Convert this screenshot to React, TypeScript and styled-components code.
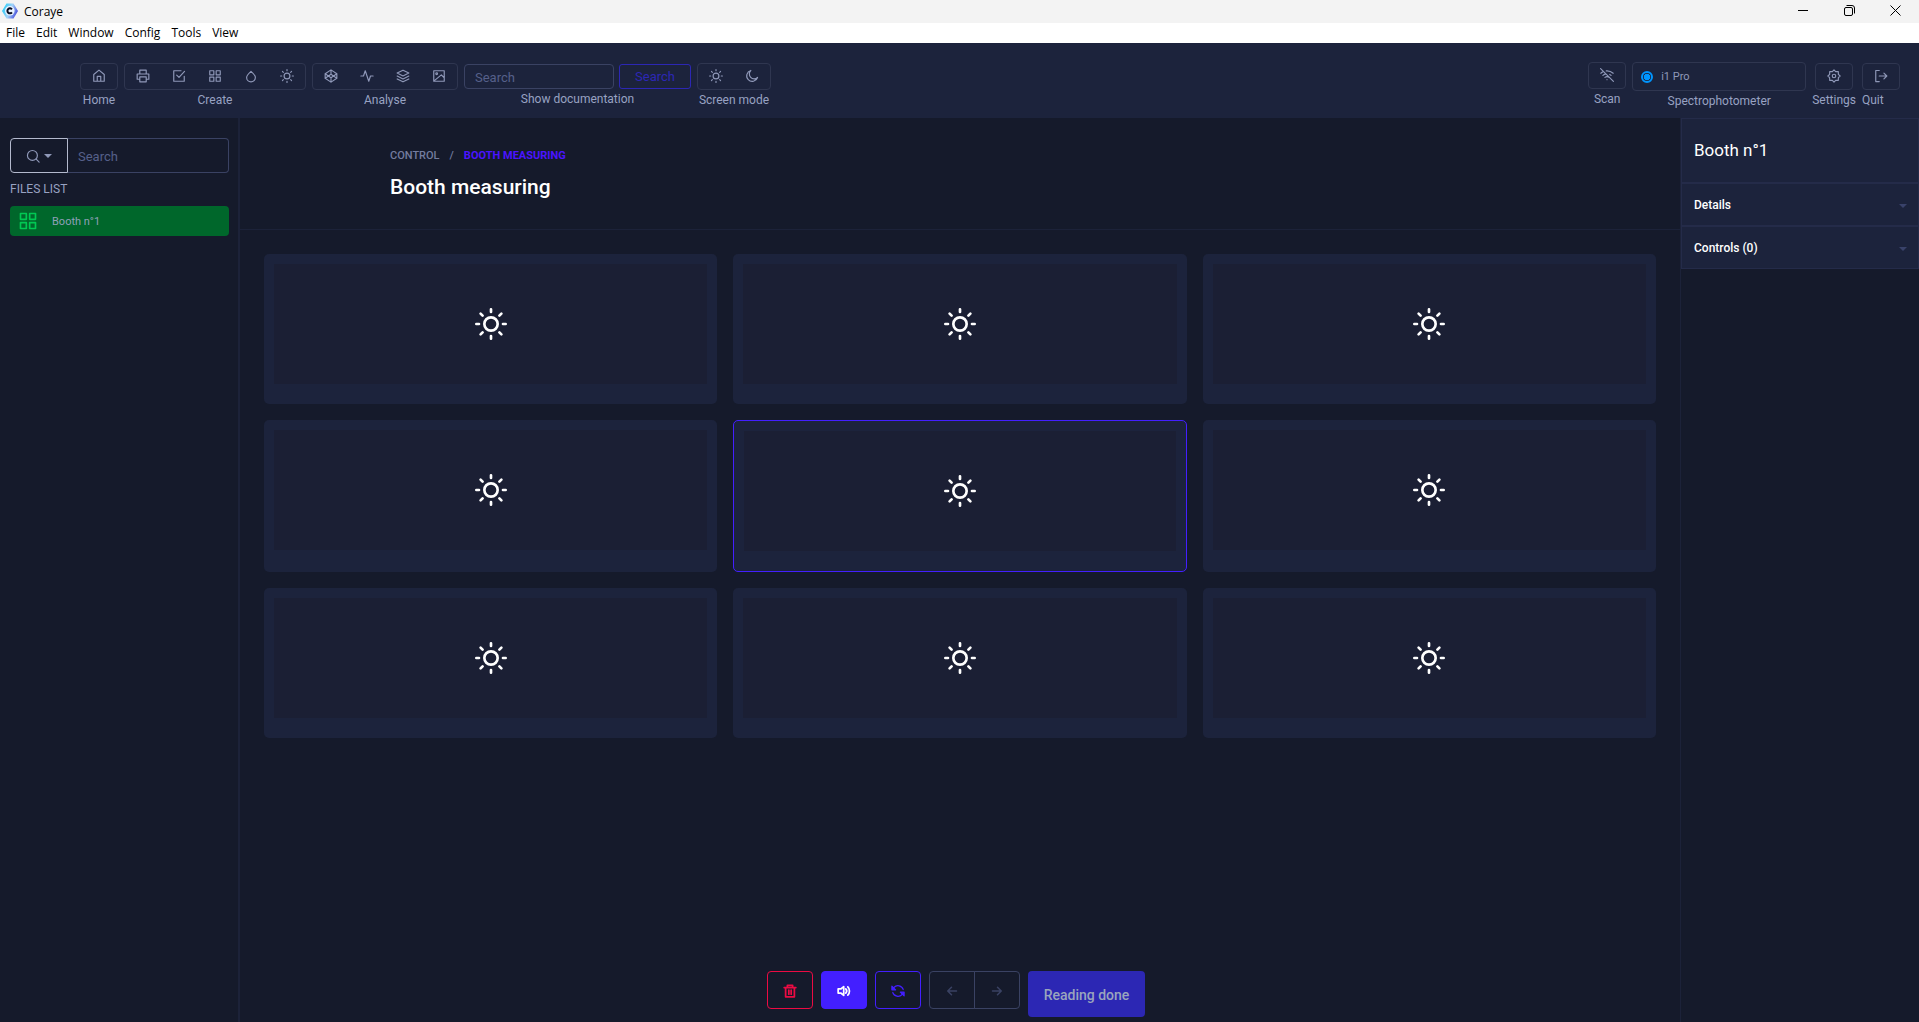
import React from "react";
import styled, { createGlobalStyle, css } from "styled-components";

const c = {
  page: "#151a2b",
  panel: "#1c233c",
  inner: "#1b1f34",
  line: "#1c2239",
  panelLine: "#242b49",
  control: "#2f3650",
  field: "#3a4263",
  text: "#8f98b8",
  label: "#98a2c2",
  violet: "#431fff",
  violetDim: "#2c27b4",
  red: "#ec0b43",
  white: "#ffffff",
};

const GlobalStyle = createGlobalStyle`
  *, *::before, *::after { box-sizing: border-box; }
  html, body, #root { height: 100%; }
  body {
    margin: 0;
    background: ${c.page};
    color: ${c.text};
    font: 400 12px/19px Roboto, "Noto Sans", sans-serif;
  }
  button, input { font: inherit; color: inherit; margin: 0; }
  button { cursor: pointer; }
  h1, h2, ul, ol, p { margin: 0; padding: 0; font-weight: inherit; }
  ul, ol { list-style: none; }
`;

const Window = styled.div`
  display: flex;
  flex-direction: column;
  min-height: 100%;
`;

const TitleBar = styled.div`
  display: flex;
  align-items: flex-start;
  height: 23px;
  padding: 0 1px 0 2px;
  background: #f3f3f3;
  color: #000;
  font: 12px/23px "Open Sans", "Noto Sans", sans-serif;
`;

const AppMark = styled.span`
  display: flex;
  padding-top: 3px;
`;

const AppName = styled.span`
  flex: 1;
  padding-left: 6px;
`;

const WindowButton = styled.button`
  display: flex;
  align-items: center;
  justify-content: center;
  width: 46px;
  height: 21px;
  padding: 0;
  border: 0;
  background: none;
`;

const MenuBar = styled.nav`
  display: flex;
  height: 20px;
  background: #fff;
  color: #000;
  font: 12px/20px "Open Sans", "Noto Sans", sans-serif;
`;

const MenuItem = styled.button`
  padding: 0 5px 0 6px;
  border: 0;
  background: none;
`;

const Toolbar = styled.header`
  display: flex;
  align-items: center;
  gap: 6px;
  padding: 19px 19px 8px 80px;
  background: ${c.panel};
`;

const ToolGroup = styled.div<{ $align?: string }>`
  display: flex;
  flex-direction: column;
  align-items: ${(p) => p.$align ?? "center"};
`;

const ToolLabel = styled.span`
  padding-top: 2px;
  color: ${c.label};
  line-height: 17px;
`;

const Spacer = styled.div`
  flex: 1;
`;

const ScanCluster = styled.div`
  display: flex;
  align-items: flex-start;
  gap: 6px;
`;

const ToolBox = styled.div`
  display: flex;
  height: 27px;
  border: 1px solid ${c.control};
  border-radius: 4px;
`;

const ToolButton = styled.button`
  display: flex;
  align-items: center;
  justify-content: center;
  width: 36px;
  padding: 0 0 1px;
  border: 0;
  background: none;
`;

const DocSearch = styled.form`
  display: flex;
  gap: 5px;
  height: 25px;
  font-size: 13px;
`;

const fieldStyle = css`
  min-width: 0;
  border: 1px solid ${c.field};
  background: none;
  outline: none;
  font-size: 13px;
  &::placeholder { color: #56608a; opacity: 1; }
`;

const DocInput = styled.input`
  ${fieldStyle}
  width: 150px;
  padding: 1px 10px 0;
  border-radius: 4px;
`;

const DocButton = styled.button`
  width: 72px;
  padding: 0;
  border: 1px solid ${c.violetDim};
  border-radius: 3px;
  background: none;
  color: ${c.violetDim};
`;

const DeviceBox = styled.label`
  display: flex;
  align-items: center;
  gap: 8px;
  width: 174px;
  height: 29px;
  padding: 0 8px;
  border: 1px solid ${c.control};
  border-radius: 4px;
  font-size: 11px;
`;

const Radio = styled.input`
  appearance: none;
  width: 12px;
  height: 12px;
  border: 2px solid #0095ff;
  border-radius: 50%;
  background: radial-gradient(circle closest-side, #0095ff 72%, ${c.panel} 90%);
`;

const Body = styled.div`
  display: flex;
  flex: 1;
`;

const Sidebar = styled.aside`
  width: 240px;
  padding: 20px 9px 0 10px;
  border-right: 2px solid ${c.line};
`;

const FileSearch = styled.form`
  display: flex;
  height: 35px;
`;

const FilterButton = styled.button`
  display: flex;
  align-items: center;
  justify-content: center;
  gap: 4px;
  width: 58px;
  padding: 0;
  border: 1px solid #b4bace;
  border-radius: 4px 0 0 4px;
  background: none;
`;

const FileInput = styled.input`
  ${fieldStyle}
  flex: 1;
  padding: 2px 10px 0;
  border-left: 0;
  border-radius: 0 4px 4px 0;
`;

const ListTitle = styled.h2`
  padding: 7px 0;
  color: ${c.label};
  font-size: 12px;
`;

const FileItem = styled.button`
  display: flex;
  align-items: center;
  gap: 14px;
  width: 100%;
  height: 30px;
  padding: 0 8px;
  border: 0;
  border-radius: 4px;
  background: #00672b;
  font-size: 11px;
  color: #8fa0b8;
  svg { color: #00c853; }
`;

const Main = styled.main`
  display: flex;
  flex: 1;
  flex-direction: column;
  min-width: 0;
`;

const PageHead = styled.div`
  padding: 28px 150px;
  border-bottom: 1px solid ${c.line};
`;

const Crumbs = styled.ol`
  display: flex;
  gap: 10px;
  font-size: 11px;
  font-weight: 500;
  text-transform: uppercase;
  color: #737c9f;
`;

const CrumbLink = styled.a`
  color: inherit;
  text-decoration: none;
`;

const Current = styled.li`
  color: #4a14ff;
  font-weight: 700;
`;

const PageTitle = styled.h1`
  padding-top: 9px;
  color: ${c.white};
  font-size: 21px;
  font-weight: 500;
  line-height: 27px;
`;

const Grid = styled.div`
  display: grid;
  grid-template-columns: repeat(3, 1fr);
  gap: 16px;
  padding: 24px;
`;

const Card = styled.button<{ $selected: boolean }>`
  display: flex;
  flex-direction: column;
  padding: 10px 10px 20px;
  border: ${(p) => (p.$selected ? `1px solid ${c.violet}` : "0")};
  border-radius: 5px;
  background: ${c.panel};
`;

const Swatch = styled.span`
  display: flex;
  align-items: center;
  justify-content: center;
  width: 100%;
  height: 120px;
  background: ${c.inner};
  color: ${c.white};
`;

const Actions = styled.div`
  display: flex;
  align-items: flex-start;
  justify-content: center;
  gap: 8px;
  margin-top: auto;
  padding: 0 8px 5px 0;
`;

const ActionButton = styled.button<{ $tone: string; $filled?: boolean }>`
  display: flex;
  align-items: center;
  justify-content: center;
  width: 46px;
  height: 38px;
  padding: 2px 0 0;
  border: 1px solid ${(p) => p.$tone};
  border-radius: 4px;
  background: ${(p) => (p.$filled ? p.$tone : "none")};
  color: ${(p) => (p.$filled ? c.white : p.$tone)};
`;

const StepGroup = styled.div`
  display: flex;
  ${ActionButton}:first-child { border-radius: 4px 0 0 4px; }
  ${ActionButton}:last-child { border-radius: 0 4px 4px 0; margin-left: -1px; }
`;

const DoneButton = styled.button`
  height: 46px;
  padding: 2px 16px 0;
  border: 0;
  border-radius: 4px;
  background: ${c.violetDim};
  color: #9aa5bd;
  font-size: 14px;
  font-weight: 500;
`;

const Inspector = styled.aside`
  width: 239px;
  border-left: 1px solid ${c.line};
`;

const InspectorTitle = styled.h2`
  height: 65px;
  padding: 0 12px;
  border: 1px solid ${c.panelLine};
  background: ${c.panel};
  color: ${c.white};
  font-size: 17px;
  line-height: 63px;
`;

const Section = styled.button`
  display: flex;
  align-items: center;
  justify-content: space-between;
  width: 100%;
  height: 43px;
  padding: 2px 11px 0 12px;
  border: 1px solid ${c.panelLine};
  background: ${c.panel};
  color: ${c.white};
  font-weight: 500;
  svg { color: #39426a; }
`;

type IconName =
  | "home" | "printer" | "check" | "grid" | "drop" | "sun" | "codepen" | "activity"
  | "layers" | "image" | "moon" | "wifiOff" | "gear" | "exit" | "search" | "trash"
  | "volume" | "refresh" | "left" | "right";

const shapes: Record<IconName, React.ReactNode> = {
  home: <path d="M3 9.500 12 2l9 7.500V21H3zM9 21v-8.500h6V21" />,
  printer: <path d="M6.500 8.500V2h11v6.500M6.500 17.500H2v-9h20v9h-4.500M6.500 13.500h11V22h-11z" />,
  check: <path d="M15.500 3H3v18h18v-8.500M8 10.500l4 4L21.500 4" />,
  grid: <path d="M3 3h7v7H3zM14 3h7v7h-7zM14 14h7v7h-7zM3 14h7v7H3z" />,
  drop: <path d="M12 4c4 3.500 7.500 6.700 7.500 10.500a7.500 7.500 0 0 1-15 0C4.500 10.700 8 7.500 12 4z" />,
  sun: (
    <>
      <circle cx="12" cy="12" r="5" />
      <path d="M12 1v2M12 21v2M4.200 4.200l1.500 1.500M18.300 18.300l1.500 1.500M1 12h2M21 12h2M4.200 19.800l1.500-1.500M18.300 5.700l1.500-1.500" />
    </>
  ),
  codepen: <path d="M12 1.500 22 8v8l-10 6.500L2 16V8zM12 1.500V9M12 15v7.500M2 8l10 7 10-7M2 16l10-7 10 7" />,
  activity: <path d="M1.500 12H6l3-9 6 18 3-9h4.500" />,
  layers: <path d="M12 2 2 7l10 5 10-5zM2 12l10 5 10-5M2 17l10 5 10-5" />,
  image: (
    <>
      <path d="M3 3h18v18H3zM4 20 16 10l5 5" />
      <circle cx="8" cy="8" r="1.500" />
    </>
  ),
  moon: <path d="M21.500 14.500A9.500 9.500 0 1 1 10 2.500a7.800 7.800 0 0 0 11.500 12z" />,
  wifiOff: <path d="M1 1l22 22M16.700 11a11 11 0 0 1 2.300 1.600M5 12.600a11 11 0 0 1 5.200-2.400M10.700 5A16 16 0 0 1 22.600 9M1.400 9a16 16 0 0 1 4.700-2.900M8.500 16.100a6 6 0 0 1 7 0M12 20h.010" />,
  gear: (
    <>
      <circle cx="12" cy="12" r="3" />
      <path d="M12 1.500 14.800 4.500 19.400 4.600 19.500 9.200 22.500 12 19.500 14.800 19.400 19.400 14.800 19.500 12 22.500 9.200 19.500 4.600 19.400 4.500 14.800 1.500 12 4.500 9.200 4.600 4.600 9.200 4.500z" />
    </>
  ),
  exit: <path d="M9 2.500H3v19h6M9 12h13M17 7l5 5-5 5" />,
  search: (
    <>
      <circle cx="11" cy="11" r="8.500" />
      <path d="m17.500 17.500 5 5" />
    </>
  ),
  trash: <path d="M2 6h20M7.500 6V2.500h9V6M4.500 6v16h15V6M10 10.500v7M14 10.500v7" />,
  volume: <path d="M11.500 4.500 6.500 8.500H2v7h4.500l5 4zM15 8.500a5 5 0 0 1 0 7M18.500 5a10 10 0 0 1 0 14" />,
  refresh: (
    <>
      <path d="M21 9.500A9.500 9.500 0 0 0 5 6L2.500 8.500M3 14.500A9.500 9.500 0 0 0 19 18l2.500-2.500" />
      <path d="M1.500 3.500v6.500h6.500zM22.500 20.500V14H16z" fill="currentColor" />
    </>
  ),
  left: <path d="M21 12H4M11 4.500 3.500 12l7.500 7.500" />,
  right: <path d="M3 12h17M13 4.500l7.500 7.500-7.500 7.500" />,
};

function Icon({ name, size = 14, weight = 2 }: { name: IconName; size?: number; weight?: number }) {
  return (
    <svg
      width={size}
      height={size}
      viewBox="0 0 24 24"
      fill="none"
      stroke="currentColor"
      strokeWidth={weight}
      strokeLinecap="round"
      strokeLinejoin="round"
      aria-hidden="true"
    >
      {shapes[name]}
    </svg>
  );
}

const Caret = () => (
  <svg width="8" height="4" viewBox="0 0 8 4" aria-hidden="true">
    <path d="M0 0h8L4 4z" fill="currentColor" />
  </svg>
);

const Logo = () => (
  <svg width="16" height="16" viewBox="0 0 16 16" aria-hidden="true">
    <defs>
      <linearGradient id="logo" x1="0" y1="0.300" x2="1" y2="0.700">
        <stop offset="0" stopColor="#22ccf8" />
        <stop offset="0.500" stopColor="#a5d2f8" />
        <stop offset="1" stopColor="#3b3fd8" />
      </linearGradient>
    </defs>
    <path d="M4.500 .5h7L16 8l-4.500 7.500h-7L0 8z" fill="url(#logo)" />
    <circle cx="7.800" cy="7.800" r="4.800" fill="#e9f3ff" />
    <path d="M9.900 6.300a2.500 2.500 0 1 0 0 3" fill="none" stroke="#0a0c20" strokeWidth="2" />
  </svg>
);

const menus = ["File", "Edit", "Window", "Config", "Tools", "View"];

const leftTools: { label: string; icons: [IconName, string][] }[] = [
  { label: "Home", icons: [["home", "Home"]] },
  {
    label: "Create",
    icons: [["printer", "Print"], ["check", "Check"], ["grid", "Booth"], ["drop", "Ink"], ["sun", "Light"]],
  },
  {
    label: "Analyse",
    icons: [["codepen", "Gamut"], ["activity", "Trend"], ["layers", "Layers"], ["image", "Image"]],
  },
];

const screenTools: [IconName, string][] = [["sun", "Light mode"], ["moon", "Dark mode"]];

function Tools({ label, icons, align }: { label: string; icons: [IconName, string][]; align?: string }) {
  return (
    <ToolGroup $align={align}>
      <ToolBox>
        {icons.map(([name, title]) => (
          <ToolButton key={name} aria-label={title}>
            <Icon name={name} />
          </ToolButton>
        ))}
      </ToolBox>
      <ToolLabel>{label}</ToolLabel>
    </ToolGroup>
  );
}

export default function App() {
  const [selected, setSelected] = React.useState(4);
  return (
    <Window>
      <GlobalStyle />
      <TitleBar>
        <AppMark><Logo /></AppMark>
        <AppName>Coraye</AppName>
        <WindowButton aria-label="Minimise">
          <svg width="11" height="11" stroke="#000"><path d="M0 5.500h10" /></svg>
        </WindowButton>
        <WindowButton aria-label="Restore">
          <svg width="11" height="11" stroke="#000" fill="none">
            <rect x=".5" y="2.500" width="8" height="8" rx="1.500" />
            <path d="M2.500 .5h5.500a2.500 2.500 0 0 1 2.500 2.500v5.500" />
          </svg>
        </WindowButton>
        <WindowButton aria-label="Close">
          <svg width="11" height="11" stroke="#000"><path d="M.5 .5l10 10M10.500 .5l-10 10" /></svg>
        </WindowButton>
      </TitleBar>
      <MenuBar>
        {menus.map((m) => (
          <MenuItem key={m}>{m}</MenuItem>
        ))}
      </MenuBar>

      <Toolbar>
        {leftTools.map((t) => (
          <Tools key={t.label} {...t} />
        ))}
        <ToolGroup>
          <DocSearch onSubmit={(e) => e.preventDefault()}>
            <DocInput placeholder="Search" aria-label="Search documentation" />
            <DocButton>Search</DocButton>
          </DocSearch>
          <ToolLabel>Show documentation</ToolLabel>
        </ToolGroup>
        <Tools label="Screen mode" icons={screenTools} />
        <Spacer />
        <ScanCluster>
          <Tools label="Scan" icons={[["wifiOff", "Scan"]]} />
          <ToolGroup>
            <DeviceBox>
              <Radio type="radio" name="device" defaultChecked />
              i1 Pro
            </DeviceBox>
            <ToolLabel>Spectrophotometer</ToolLabel>
          </ToolGroup>
        </ScanCluster>
        <Tools label="Settings" icons={[["gear", "Settings"]]} />
        <Tools label="Quit" icons={[["exit", "Quit"]]} align="flex-start" />
      </Toolbar>

      <Body>
        <Sidebar>
          <FileSearch onSubmit={(e) => e.preventDefault()}>
            <FilterButton type="button" aria-label="Search filter">
              <Icon name="search" />
              <Caret />
            </FilterButton>
            <FileInput placeholder="Search" aria-label="Search files" />
          </FileSearch>
          <ListTitle>FILES LIST</ListTitle>
          <FileItem>
            <Icon name="grid" size={20} />
            Booth n°1
          </FileItem>
        </Sidebar>

        <Main>
          <PageHead>
            <Crumbs>
              <li><CrumbLink href="#control">Control</CrumbLink></li>
              <li>/</li>
              <Current>Booth measuring</Current>
            </Crumbs>
            <PageTitle>Booth measuring</PageTitle>
          </PageHead>
          <Grid>
            {Array.from({ length: 9 }, (_, i) => (
              <Card
                key={i}
                $selected={i === selected}
                onClick={() => setSelected(i)}
                aria-label={`Position ${i + 1}`}
              >
                <Swatch><Icon name="sun" size={32} /></Swatch>
              </Card>
            ))}
          </Grid>
          <Actions>
            <ActionButton $tone={c.red} aria-label="Delete"><Icon name="trash" weight={3} /></ActionButton>
            <ActionButton $tone={c.violet} $filled aria-label="Sound"><Icon name="volume" weight={3} /></ActionButton>
            <ActionButton $tone={c.violet} aria-label="Restart"><Icon name="refresh" /></ActionButton>
            <StepGroup>
              <ActionButton $tone={c.field} aria-label="Previous"><Icon name="left" weight={3} size={12} /></ActionButton>
              <ActionButton $tone={c.field} aria-label="Next"><Icon name="right" weight={3} size={12} /></ActionButton>
            </StepGroup>
            <DoneButton>Reading done</DoneButton>
          </Actions>
        </Main>

        <Inspector>
          <InspectorTitle>Booth n°1</InspectorTitle>
          <Section>Details<Caret /></Section>
          <Section>Controls (0)<Caret /></Section>
        </Inspector>
      </Body>
    </Window>
  );
}
